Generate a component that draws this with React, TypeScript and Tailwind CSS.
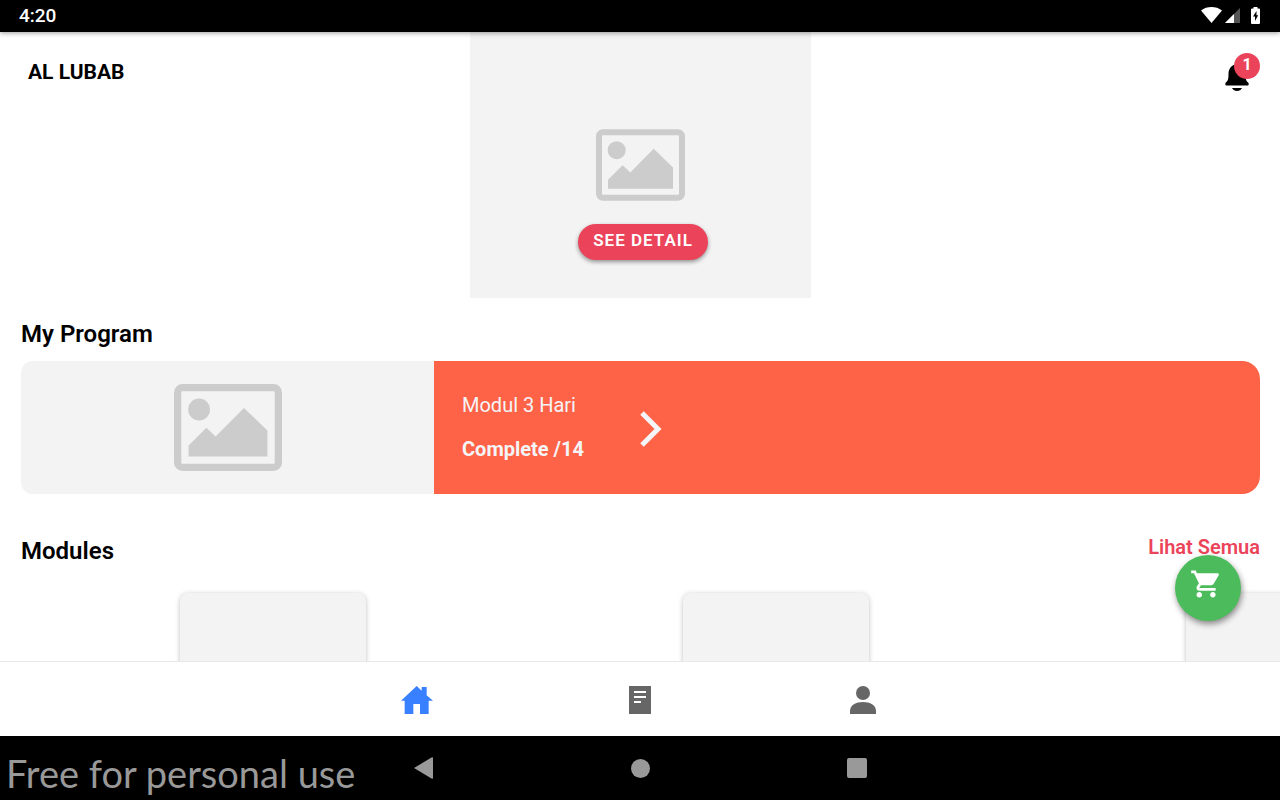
import type { ReactNode } from "react";
import { IoMdCart } from "react-icons/io";

interface NavItem {
  label: string;
  icon: ReactNode;
  color: string;
}

const navItems: NavItem[] = [
  {
    label: "Home",
    color: "text-[#3880ff]",
    icon: (
      <svg viewBox="0 0 96 84" className="h-7 w-8" fill="currentColor">
        <path d="M47 0 62 14V3H77V28L96 44H83V84H57V54H37V84H11V44H0Z" />
      </svg>
    ),
  },
  {
    label: "Articles",
    color: "text-[#666666]",
    icon: (
      <svg viewBox="0 0 22 28" className="h-7 w-[22px]">
        <path d="M0 0H22V28H0Z" fill="currentColor" />
        <path d="M5 6H17M5 11H17M5 16H12" stroke="white" strokeWidth="2" />
      </svg>
    ),
  },
  {
    label: "Profile",
    color: "text-[#666666]",
    icon: (
      <svg viewBox="0 0 26 28" className="h-7 w-[26px]" fill="currentColor">
        <circle cx="13" cy="7" r="7" />
        <path d="M0 28V25C0 19 6 16 13 16S26 19 26 25V28Z" />
      </svg>
    ),
  },
];

const modules = [1, 2, 3];

function ImagePlaceholder({ className }: { className: string }) {
  return (
    <svg viewBox="0 0 267 215" className={className} fill="#cccccc">
      <rect x="9" y="9" width="249" height="197" rx="12" fill="none" stroke="#cccccc" strokeWidth="18" />
      <circle cx="62" cy="63" r="27" />
      <path d="M36 152 80 108 103 130 173 59 231 115V179H36Z" />
    </svg>
  );
}

function StatusBar() {
  return (
    <div className="z-10 flex h-8 shrink-0 items-center justify-between bg-black pr-5 pl-[19px] text-white shadow-[0_1px_5px_rgba(0,0,0,0.4)]">
      <span className="text-[19px] leading-8 font-medium">4:20</span>
      <div className="flex items-center pb-0.5">
        <svg viewBox="0 0 21 16" className="mr-[3px] h-4 w-[21px]" fill="currentColor">
          <path d="M0 3.5C6-1.1 15-1.1 21 3.5L10.500 16Z" />
        </svg>
        <svg viewBox="0 0 15 15" className="mr-[11px] h-[15px] w-[15px]" fill="currentColor">
          <path d="M15 0V15H0Z" fill="#555555" />
          <path d="M9 6V15H0Z" />
        </svg>
        <svg viewBox="0 0 9 17" className="h-[17px] w-[9px]">
          <path d="M0 2.500Q0 1.500 1 1.500H2.500V0H6.500V1.500H8Q9 1.500 9 2.500V16Q9 17 8 17H1Q0 17 0 16Z" fill="white" />
          <path d="M5.500 4 2 9.500H4V14L7.200 8.300H5.500Z" fill="black" />
        </svg>
      </div>
    </div>
  );
}

function Header() {
  return (
    <header className="grid grid-cols-[1fr_341px_1fr]">
      <h1 className="pt-6 pl-7 text-[21px] leading-8 font-bold">AL LUBAB</h1>
      <div className="flex h-[266px] flex-col items-center bg-[#f3f3f3] pt-[97px]">
        <ImagePlaceholder className="h-[72px] w-[89px]" />
        <button className="mt-[23px] ml-1.5 h-9 rounded-full bg-[#eb445a] px-[15px] pb-1 text-[17px] leading-8 font-semibold tracking-[1px] text-white shadow-[0_2px_4px_rgba(0,0,0,0.4)]">
          SEE DETAIL
        </button>
      </div>
      <div className="flex justify-end pt-[21px] pr-5">
        <button aria-label="Notifications" className="relative h-10 w-[35px]">
          <svg viewBox="0 0 24 27" className="mt-2 h-[27px] w-6" fill="currentColor">
            <path d="M12 0C6 1 3.500 5 3.500 10C3.500 16 2.500 17 .8 18.500C0 19.500 0 21.500 1.500 21.500H22.500C24 21.500 24 19.500 23.200 18.500C21.500 17 20.500 16 20.500 10C20.500 5 18 1 12 0Z" />
            <path d="M7 24H17Q15.500 27 12 27T7 24Z" />
          </svg>
          <span className="absolute top-0 right-0 size-[26px] rounded-full bg-[#eb445a] text-center text-base leading-6 font-bold text-white">
            1
          </span>
        </button>
      </div>
    </header>
  );
}

function ProgramCard() {
  return (
    <a href="#program" className="grid h-[133px] grid-cols-3 overflow-hidden rounded-l-xl rounded-r-[18px]">
      <div className="flex items-center justify-center bg-[#f3f3f3]">
        <ImagePlaceholder className="h-[87px] w-[108px]" />
      </div>
      <div className="col-span-2 flex items-center bg-[#ff6347] pl-7 text-xl text-[#f4f5f8]">
        <div className="w-[178px] pb-0.5 leading-7">
          <p>Modul 3 Hari</p>
          <p className="mt-4 font-bold">Complete /14</p>
        </div>
        <svg viewBox="0 0 22 36" className="mt-0.5 h-9 w-[22px]" fill="none" stroke="currentColor" strokeWidth="5">
          <path d="M2 2 18 18 2 34" />
        </svg>
      </div>
    </a>
  );
}

function ModuleList() {
  return (
    <div className="mt-[26px] flex">
      {modules.map((id) => (
        <div key={id} className="flex w-[503px] shrink-0 justify-center">
          <div className="h-60 w-[186px] rounded-lg bg-[#f3f3f3] shadow-[0_1px_5px_rgba(0,0,0,0.25)]" />
        </div>
      ))}
    </div>
  );
}

function TabBar() {
  return (
    <nav className="relative z-10 flex h-[75px] shrink-0 items-center justify-center border-t border-[#e8e8e8] bg-white pt-0.5">
      {navItems.map((item) => (
        <a
          key={item.label}
          href={`#${item.label.toLowerCase()}`}
          aria-label={item.label}
          className={`flex w-[223px] justify-center ${item.color}`}
        >
          {item.icon}
        </a>
      ))}
    </nav>
  );
}

function SystemBar() {
  return (
    <div className="relative flex h-16 shrink-0 items-center justify-center bg-black text-[#999999]">
      <p className="absolute top-[11px] left-1.5 font-[Lato,sans-serif] text-[38px] leading-[52px]">
        Free for personal use
      </p>
      <button aria-label="Back" className="flex w-[217px] justify-center">
        <svg viewBox="0 0 19 22" className="h-[22px] w-[19px]" fill="currentColor">
          <path d="M0 11 17.500.500Q19 0 19 1V21Q19 22 17.500 21.500Z" />
        </svg>
      </button>
      <button aria-label="Home screen" className="flex w-[217px] justify-center">
        <span className="size-[19px] rounded-full bg-current" />
      </button>
      <button aria-label="Recent apps" className="flex w-[217px] justify-center">
        <span className="size-5 rounded-xs bg-current" />
      </button>
    </div>
  );
}

export default function App() {
  return (
    <div className="flex h-screen flex-col bg-white font-[Roboto,sans-serif] text-black">
      <StatusBar />
      <div className="relative flex min-h-0 flex-1 flex-col">
        <main className="min-h-0 flex-1 overflow-hidden">
          <Header />
          <section className="pt-5 pr-5 pl-[21px]">
            <h2 className="mb-[11px] text-2xl leading-8 font-semibold">My Program</h2>
            <ProgramCard />
          </section>
          <section className="pt-[37px] pl-[21px]">
            <div className="flex items-start justify-between pr-5">
              <h2 className="pt-1 text-2xl leading-8 font-semibold">Modules</h2>
              <a href="#modules" className="text-xl leading-8 font-semibold text-[#eb445a]">
                Lihat Semua
              </a>
            </div>
            <ModuleList />
          </section>
        </main>
        <button
          aria-label="Cart"
          className="absolute right-[39px] bottom-10 flex size-[66px] items-center justify-center rounded-full bg-[#4cbb5c] pr-1.5 pb-2 text-white shadow-[1px_3px_6px_rgba(0,0,0,0.45)]"
        >
          <IoMdCart className="size-[34px]" />
        </button>
      </div>
      <TabBar />
      <SystemBar />
    </div>
  );
}
